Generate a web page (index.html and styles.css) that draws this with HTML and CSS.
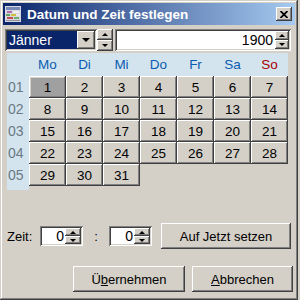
FILE: index.html
```html
<!DOCTYPE html>
<html lang="de">
<head>
    <meta charset="UTF-8">
    <meta name="viewport" content="width=device-width, initial-scale=1.0">
    <title>Datum und Zeit festlegen</title>
    <link rel="stylesheet" href="styles.css">
</head>
<body>
    <div class="window">
        <!-- Title bar -->
        <div class="titlebar">
            <svg class="app-icon" width="16" height="16" viewBox="0 0 16 16">
                <rect x="0" y="0" width="16" height="16" fill="#d8d8e0"/>
                <rect x="1" y="1" width="14" height="3" fill="#7a8ab8"/>
                <rect x="2" y="5" width="5" height="2" fill="#b070b0"/>
                <rect x="8" y="5" width="6" height="2" fill="#f0f0f0"/>
                <rect x="1" y="8" width="4" height="2" fill="#60a060"/>
                <rect x="6" y="8" width="5" height="2" fill="#d0c040"/>
                <rect x="11" y="8" width="4" height="2" fill="#e8e8e8"/>
                <rect x="2" y="11" width="6" height="2" fill="#c05050"/>
                <rect x="9" y="11" width="5" height="2" fill="#70b070"/>
                <rect x="1" y="14" width="14" height="1" fill="#9090a0"/>
            </svg>
            <span class="title">Datum und Zeit festlegen</span>
            <div class="close-btn raised">
                <svg width="8" height="7" viewBox="0 0 8 7">
                    <path d="M0.5 0 L7.5 7 M7.5 0 L0.5 7" stroke="#000" stroke-width="1.8"/>
                </svg>
            </div>
        </div>

        <div class="content">
            <!-- Month / year -->
            <div class="date-row">
                <div class="combo sunken">
                    <span class="combo-value">Jänner</span>
                    <span class="drop-btn raised"><i class="tri-down"></i></span>
                </div>
                <div class="spinner">
                    <span class="spin-btn raised"><i class="tri-up"></i></span>
                    <span class="spin-btn raised"><i class="tri-dn"></i></span>
                </div>
                <div class="year-field sunken">
                    <span class="field-value">1900</span>
                    <div class="spinner">
                        <span class="spin-btn raised"><i class="tri-up"></i></span>
                        <span class="spin-btn raised"><i class="tri-dn"></i></span>
                    </div>
                </div>
            </div>

            <!-- Calendar -->
            <div class="calendar" id="calendar">
                <div class="corner"></div>
            </div>

            <!-- Time -->
            <div class="time-row">
                <span class="label">Zeit:</span>
                <div class="time-field sunken">
                    <span class="field-value">0</span>
                    <div class="spinner">
                        <span class="spin-btn raised"><i class="tri-up"></i></span>
                        <span class="spin-btn raised"><i class="tri-dn"></i></span>
                    </div>
                </div>
                <span class="colon">:</span>
                <div class="time-field sunken">
                    <span class="field-value">0</span>
                    <div class="spinner">
                        <span class="spin-btn raised"><i class="tri-up"></i></span>
                        <span class="spin-btn raised"><i class="tri-dn"></i></span>
                    </div>
                </div>
                <div class="btn raised now-btn">Auf Jetzt setzen</div>
            </div>

            <!-- Dialog buttons -->
            <div class="dialog-buttons">
                <div class="btn raised ok-btn">Ü<u>b</u>ernehmen</div>
                <div class="btn raised cancel-btn"><u>A</u>bbrechen</div>
            </div>
        </div>
    </div>

    <script>
        const days = ['Mo', 'Di', 'Mi', 'Do', 'Fr', 'Sa', 'So'];
        const calendar = document.getElementById('calendar');

        days.forEach((d, i) => {
            const el = document.createElement('div');
            el.className = 'day-name' + (i === 6 ? ' sunday' : '');
            el.textContent = d;
            calendar.appendChild(el);
        });

        // January 1900 starts on a Monday
        let day = 1;
        for (let week = 1; week <= 5; week++) {
            const wk = document.createElement('div');
            wk.className = 'week-num';
            wk.textContent = '0' + week;
            calendar.appendChild(wk);

            for (let col = 0; col < 7; col++) {
                const cell = document.createElement('div');
                if (day <= 31) {
                    cell.className = 'day raised' + (day === 1 ? ' selected' : '');
                    cell.textContent = day;
                    day++;
                } else {
                    cell.className = 'empty';
                }
                calendar.appendChild(cell);
            }
        }

        const filler = document.createElement('div');
        filler.className = 'week-filler';
        calendar.appendChild(filler);
    </script>
</body>
</html>
```

FILE: styles.css
```css
body {
    margin: 0;
    padding: 0;
    background-color: #d4d0c8;
    font-family: "Liberation Sans", Arial, sans-serif;
    font-size: 13px;
    color: #000;
}

/* Classic 3D borders */
.raised {
    background-color: #d4d0c8;
    box-shadow: inset -1px -1px #404040, inset 1px 1px #ffffff,
                inset -2px -2px #808080, inset 2px 2px #d4d0c8;
}

.sunken {
    box-shadow: inset 1px 1px #808080, inset -1px -1px #ffffff,
                inset 2px 2px #404040, inset -2px -2px #d4d0c8;
}

.window {
    width: 298px;
    height: 300px;
    box-sizing: border-box;
    padding: 3px;
    background-color: #d4d0c8;
    box-shadow: inset -1px -1px #404040, inset 1px 1px #d4d0c8,
                inset -2px -2px #808080, inset 2px 2px #ffffff;
}

.titlebar {
    height: 22px;
    display: flex;
    align-items: center;
    background: linear-gradient(to right, #0a246a, #a6caf0);
}

.app-icon {
    margin-left: 2px;
    flex-shrink: 0;
}

.title {
    margin-left: 6px;
    color: #fff;
    font-weight: bold;
    font-size: 13.5px;
}

.close-btn {
    margin-left: auto;
    margin-right: 3px;
    width: 16px;
    height: 14px;
    display: flex;
    justify-content: center;
    align-items: center;
}

.content {
    padding: 4px 2px 0 2px;
}

/* Month and year row */
.date-row {
    display: flex;
    height: 22px;
}

.combo {
    width: 92px;
    box-sizing: border-box;
    padding: 2px;
    display: flex;
}

.combo-value {
    flex: 1;
    background-color: #0a246a;
    color: #fff;
    font-size: 14px;
    line-height: 18px;
    padding-left: 2px;
}

.drop-btn {
    width: 18px;
    display: flex;
    justify-content: center;
    align-items: center;
}

.tri-down {
    width: 0;
    height: 0;
    border-left: 4px solid transparent;
    border-right: 4px solid transparent;
    border-top: 4px solid #000;
}

.spinner {
    width: 16px;
    display: flex;
    flex-direction: column;
}

.spin-btn {
    flex: 1;
    display: flex;
    justify-content: center;
    align-items: center;
}

.tri-up {
    width: 0;
    height: 0;
    border-left: 3px solid transparent;
    border-right: 3px solid transparent;
    border-bottom: 3px solid #000;
}

.tri-dn {
    width: 0;
    height: 0;
    border-left: 3px solid transparent;
    border-right: 3px solid transparent;
    border-top: 3px solid #000;
}

.year-field {
    margin-left: 2px;
    width: 176px;
    box-sizing: border-box;
    padding: 2px;
    display: flex;
    background-color: #fff;
}

.year-field .spinner {
    width: 14px;
}

.field-value {
    flex: 1;
    text-align: right;
    font-size: 14px;
    line-height: 18px;
    padding-right: 2px;
}

/* Calendar */
.calendar {
    margin: 2px 0 0 2px;
    display: grid;
    grid-template-columns: 22px repeat(7, 37px);
    grid-template-rows: 23px repeat(5, 22px) 4px;
    width: 281px;
}

.corner,
.day-name,
.week-num,
.week-filler {
    background-color: #d3e4ef;
}

.day-name {
    display: flex;
    justify-content: center;
    align-items: center;
    color: #0a5cb0;
    font-size: 13.5px;
}

.day-name.sunday {
    color: #a80000;
}

.week-num {
    display: flex;
    align-items: center;
    padding-left: 1px;
    color: #6c7884;
    font-size: 14px;
}

.day {
    display: flex;
    justify-content: center;
    align-items: center;
    font-size: 13.5px;
}

.day.selected {
    background-color: #a0a0a0;
}

/* Time row */
.time-row {
    margin-top: 33px;
    height: 26px;
    padding-left: 2px;
    display: flex;
    align-items: center;
}

.label {
    width: 33px;
}

.time-field {
    width: 43px;
    height: 20px;
    box-sizing: border-box;
    padding: 2px;
    display: flex;
    background-color: #fff;
}

.time-field .field-value {
    font-size: 14px;
    line-height: 16px;
    padding-right: 1px;
}

.colon {
    width: 26px;
    text-align: center;
}

.btn {
    height: 26px;
    box-sizing: border-box;
    display: flex;
    justify-content: center;
    align-items: center;
    font-size: 13px;
}

.now-btn {
    margin-left: 9px;
    width: 130px;
}

/* Dialog buttons */
.dialog-buttons {
    margin-top: 17px;
    display: flex;
    justify-content: flex-end;
    gap: 7px;
}

.ok-btn {
    width: 112px;
}

.cancel-btn {
    width: 101px;
}
```
